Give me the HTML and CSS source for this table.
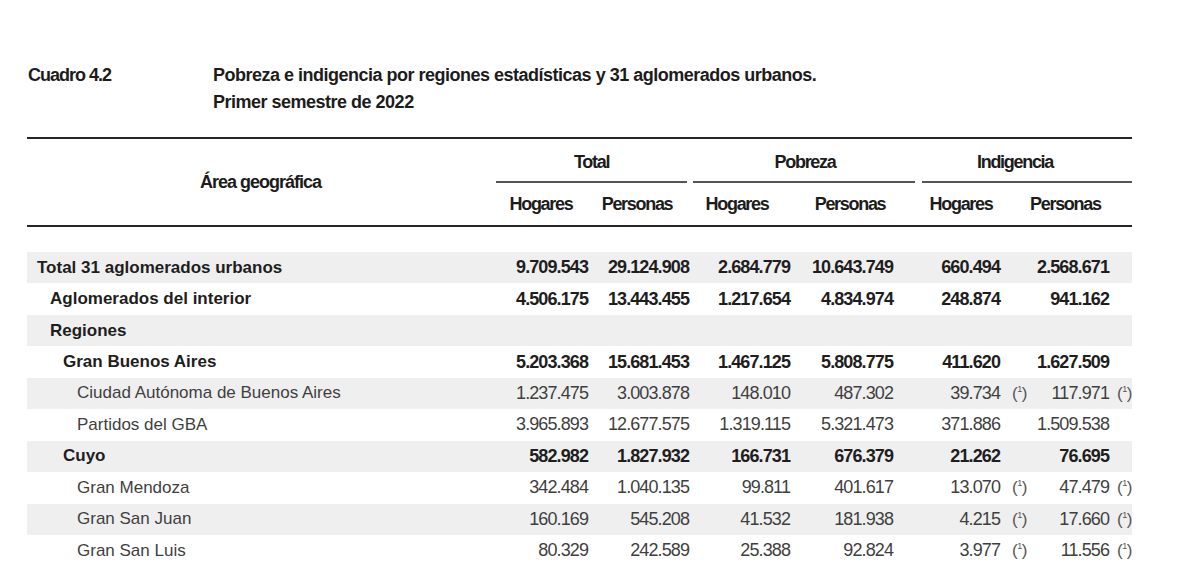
FILE: index.html
```html
<!DOCTYPE html>
<html lang="es">
<head>
<meta charset="utf-8">
<title>Cuadro 4.2</title>
<link rel="stylesheet" href="styles.css">
</head>
<body>
<div class="page">
  <div class="caption">
    <div class="cap-num">Cuadro 4.2</div>
    <div class="cap-title">Pobreza e indigencia por regiones estadísticas y 31 aglomerados urbanos.<br>Primer semestre de 2022</div>
  </div>
  <table class="tbl">
    <colgroup>
      <col class="w-area"><col class="w-c1"><col class="w-c2"><col class="w-c3"><col class="w-c4"><col class="w-c5"><col class="w-c6">
    </colgroup>
    <thead>
      <tr class="hrow1">
        <th class="area" rowspan="2">Área geográfica</th>
        <th class="grp grp-total" colspan="2"><div class="grp-line">Total</div></th>
        <th class="grp grp-pob" colspan="2"><div class="grp-line">Pobreza</div></th>
        <th class="grp grp-ind" colspan="2"><div class="grp-line">Indigencia</div></th>
      </tr>
      <tr class="hrow2">
        <th class="sub s1">Hogares</th>
        <th class="sub s2">Personas</th>
        <th class="sub s3">Hogares</th>
        <th class="sub s4">Personas</th>
        <th class="sub s5">Hogares</th>
        <th class="sub s6">Personas</th>
      </tr>
    </thead>
    <tbody class="gap"><tr><td colspan="7"></td></tr></tbody>
    <tbody class="data">
      <tr class="shade strong">
        <td class="lbl l0">Total 31 aglomerados urbanos</td>
        <td class="n c1">9.709.543</td><td class="n c2">29.124.908</td><td class="n c3">2.684.779</td><td class="n c4">10.643.749</td>
        <td class="n c5">660.494<span class="fn"></span></td><td class="n c6">2.568.671<span class="fn"></span></td>
      </tr>
      <tr class="strong">
        <td class="lbl l1">Aglomerados del interior</td>
        <td class="n c1">4.506.175</td><td class="n c2">13.443.455</td><td class="n c3">1.217.654</td><td class="n c4">4.834.974</td>
        <td class="n c5">248.874<span class="fn"></span></td><td class="n c6">941.162<span class="fn"></span></td>
      </tr>
      <tr class="shade strong">
        <td class="lbl l1">Regiones</td>
        <td class="n c1"></td><td class="n c2"></td><td class="n c3"></td><td class="n c4"></td>
        <td class="n c5"><span class="fn"></span></td><td class="n c6"><span class="fn"></span></td>
      </tr>
      <tr class="strong">
        <td class="lbl l2">Gran Buenos Aires</td>
        <td class="n c1">5.203.368</td><td class="n c2">15.681.453</td><td class="n c3">1.467.125</td><td class="n c4">5.808.775</td>
        <td class="n c5">411.620<span class="fn"></span></td><td class="n c6">1.627.509<span class="fn"></span></td>
      </tr>
      <tr class="shade">
        <td class="lbl l3">Ciudad Autónoma de Buenos Aires</td>
        <td class="n c1">1.237.475</td><td class="n c2">3.003.878</td><td class="n c3">148.010</td><td class="n c4">487.302</td>
        <td class="n c5">39.734<span class="fn">(<sup>1</sup>)</span></td><td class="n c6">117.971<span class="fn">(<sup>1</sup>)</span></td>
      </tr>
      <tr>
        <td class="lbl l3">Partidos del GBA</td>
        <td class="n c1">3.965.893</td><td class="n c2">12.677.575</td><td class="n c3">1.319.115</td><td class="n c4">5.321.473</td>
        <td class="n c5">371.886<span class="fn"></span></td><td class="n c6">1.509.538<span class="fn"></span></td>
      </tr>
      <tr class="shade strong">
        <td class="lbl l2">Cuyo</td>
        <td class="n c1">582.982</td><td class="n c2">1.827.932</td><td class="n c3">166.731</td><td class="n c4">676.379</td>
        <td class="n c5">21.262<span class="fn"></span></td><td class="n c6">76.695<span class="fn"></span></td>
      </tr>
      <tr>
        <td class="lbl l3">Gran Mendoza</td>
        <td class="n c1">342.484</td><td class="n c2">1.040.135</td><td class="n c3">99.811</td><td class="n c4">401.617</td>
        <td class="n c5">13.070<span class="fn">(<sup>1</sup>)</span></td><td class="n c6">47.479<span class="fn">(<sup>1</sup>)</span></td>
      </tr>
      <tr class="shade">
        <td class="lbl l3">Gran San Juan</td>
        <td class="n c1">160.169</td><td class="n c2">545.208</td><td class="n c3">41.532</td><td class="n c4">181.938</td>
        <td class="n c5">4.215<span class="fn">(<sup>1</sup>)</span></td><td class="n c6">17.660<span class="fn">(<sup>1</sup>)</span></td>
      </tr>
      <tr>
        <td class="lbl l3">Gran San Luis</td>
        <td class="n c1">80.329</td><td class="n c2">242.589</td><td class="n c3">25.388</td><td class="n c4">92.824</td>
        <td class="n c5">3.977<span class="fn">(<sup>1</sup>)</span></td><td class="n c6">11.556<span class="fn">(<sup>1</sup>)</span></td>
      </tr>
    </tbody>
  </table>
</div>
</body>
</html>
```

FILE: styles.css
```css
html, body {
  margin: 0;
  padding: 0;
  background: #ffffff;
}

.page {
  padding: 62px 0 0 27px;
  width: 1105px;
  color: #1e1e1e;
  font-family: "Liberation Sans", Arial, sans-serif;
}

.caption {
  display: flex;
  font-weight: bold;
  font-size: 18px;
  line-height: 27px;
  color: #1c1c1c;
  margin-bottom: 21px;
}

.cap-num {
  width: 185px;
  padding-left: 1px;
  letter-spacing: -1px;
}

.cap-title {
  letter-spacing: -0.5px;
}

.tbl {
  width: 1105px;
  border-collapse: collapse;
  table-layout: fixed;
}

.w-area { width: 467px; }
.w-c1 { width: 96px; }
.w-c2 { width: 100px; }
.w-c3 { width: 110px; }
.w-c4 { width: 118px; }
.w-c5 { width: 112px; }
.w-c6 { width: 102px; }

.tbl thead {
  border-top: 2px solid #262626;
  border-bottom: 2px solid #262626;
}

.tbl th {
  font-weight: bold;
  font-size: 18px;
  letter-spacing: -1.3px;
  color: #1c1c1c;
  padding: 0;
}

.area {
  text-align: center;
  vertical-align: middle;
  letter-spacing: -1px !important;
}

.hrow1 th.grp {
  height: 44px;
  vertical-align: bottom;
  text-align: center;
}

.grp-line {
  border-bottom: 2px solid #555555;
  height: 32px;
  line-height: 26px;
}

.grp-total .grp-line { margin: 0 3px 0 2px; }
.grp-pob .grp-line { margin: 0 3px 0 3px; padding-left: 2px; }
.grp-ind .grp-line { margin: 0 0 0 4px; padding-right: 24px; }

.hrow2 th {
  height: 42px;
  text-align: center;
  vertical-align: middle;
}

.s1 { padding-right: 2px !important; }
.s2 { padding-right: 6px !important; }
.s3 { padding-right: 16px !important; }
.s4 { padding-right: 18px !important; }
.s5 { padding-right: 26px !important; }
.s6 { padding-right: 32px !important; }

.gap td {
  height: 25px;
  padding: 0;
}

.data td {
  height: 31.45px;
  padding: 0;
  white-space: nowrap;
  color: #3f3f3f;
}

.data tr.shade td {
  background: #efefef;
}

.lbl {
  font-size: 17px;
}

.l0 { padding-left: 10px !important; }
.l1 { padding-left: 23px !important; }
.l2 { padding-left: 36px !important; }
.l3 { padding-left: 50px !important; }

.n {
  text-align: right;
  font-size: 18px;
  letter-spacing: -0.9px;
}

.data tr.strong td {
  font-weight: bold;
  color: #1e1e1e;
}

.c1 { padding-right: 2px !important; }
.c2 { padding-right: 1px !important; }
.c3 { padding-right: 10px !important; }
.c4 { padding-right: 25px !important; }
.c5, .c6 { padding-right: 0 !important; }

.fn {
  display: inline-block;
  text-align: left;
  font-weight: normal;
  color: #555555;
  font-size: 17px;
  letter-spacing: -0.5px;
}

.c5 .fn { width: 30px; padding-left: 12px; box-sizing: border-box; }
.c6 .fn { width: 23px; padding-left: 8px; box-sizing: border-box; }

.fn sup {
  font-size: 9px;
  vertical-align: 7px;
  line-height: 0;
}
```
